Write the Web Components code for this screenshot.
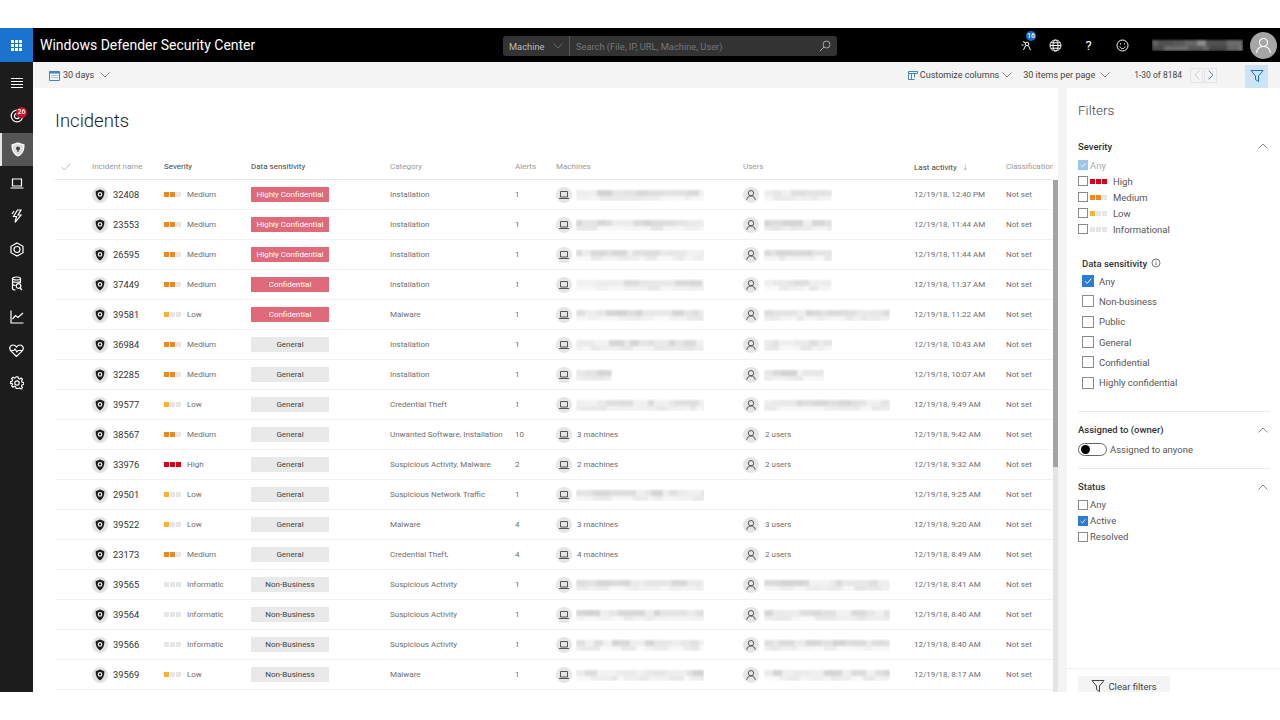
<!DOCTYPE html>
<html lang="en">
<head>
<meta charset="utf-8">
<title>Incidents</title>
<style>
  html, body { margin: 0; background: #fff; }
  body { font-family: Roboto, "Liberation Sans", sans-serif; color: #333; overflow: hidden; }
</style>
</head>
<body>
<wd-shell></wd-shell>
<script>
const ICON = {
  chevDown: '<svg width="10" height="6" viewBox="0 0 10 6" fill="none" stroke="currentColor" stroke-width="1"><path d="M.5.5 5 5 9.5.5"/></svg>',
  chevUp: '<svg width="10" height="6" viewBox="0 0 10 6" fill="none" stroke="currentColor" stroke-width="1"><path d="M.5 5.5 5 1l4.5 4.5"/></svg>',
  funnel: '<svg width="14" height="14" viewBox="0 0 14 14" fill="none" stroke="currentColor" stroke-width="1"><path d="M1 1.500h12L8.500 7v5.500l-3-2V7z"/></svg>',
  shield: '<svg width="16" height="16" viewBox="0 0 16 16"><circle cx="8" cy="8" r="8" fill="#e4e4e4"/><path d="M8 2.600 12.400 4.200c0 4.400-1.200 7.400-4.400 9.200C4.800 11.600 3.600 8.600 3.600 4.200z" fill="#1c1c1c"/><circle cx="8" cy="7.400" r="2.300" fill="#eee"/><circle cx="8" cy="7.400" r="1.100" fill="#1c1c1c"/></svg>',
  laptop: '<svg width="16" height="16" viewBox="0 0 16 16" fill="none"><circle cx="8" cy="8" r="8" fill="#e6e6e6"/><path d="M4.500 4.500h7v5.500h-7zM3 11.500h10" stroke="#555" stroke-width="1"/></svg>',
  person: '<svg width="16" height="16" viewBox="0 0 16 16" fill="none"><circle cx="8" cy="8" r="8" fill="#e6e6e6"/><circle cx="8" cy="6.200" r="2.700" stroke="#555"/><path d="M3.800 12.800c.4-2.600 2-3.900 4.200-3.900s3.800 1.300 4.200 3.900" stroke="#555"/></svg>'
};

function tpl(css, html) {
  return `<style>${css}</style>${html}`;
}

// pixelated strip standing in for redacted names
class BlurStrip extends HTMLElement {
  connectedCallback() {
    const w = +this.getAttribute("w") || 60;
    let seed = +this.getAttribute("seed") || 7;
    const rnd = () => (seed = (seed * 16807) % 2147483647) / 2147483647;
    const dark = this.hasAttribute("dark");
    const band = (lo, hi) => {
      const stops = [];
      let x = 0;
      while (x < w) {
        const step = 6 + Math.floor(rnd() * 4) * 3;
        const v = Math.round(lo + rnd() * (hi - lo));
        const c = `rgb(${v},${v},${v})`;
        stops.push(`${c} ${x}px`, `${c} ${x + step}px`);
        x += step;
      }
      return `linear-gradient(90deg,${stops.join(",")})`;
    };
    const root = this.attachShadow({ mode: "open" });
    const a = dark ? band(70, 150) : band(210, 242);
    const b = dark ? band(60, 130) : band(230, 250);
    root.innerHTML = tpl(`
      :host { display: block; width: ${w}px; height: 12px; overflow: hidden; }
      div { height: 100%; filter: blur(1.2px); background-image: ${a}, ${b};
        background-size: 100% 6px, 100% 6px; background-position: 0 1px, 0 7px; background-repeat: no-repeat; }
    `, `<div></div>`);
  }
}
customElements.define("blur-strip", BlurStrip);

class SevBars extends HTMLElement {
  connectedCallback() {
    const level = (this.getAttribute("level") || "").toLowerCase();
    const map = { high: [3, "#d7001c"], medium: [2, "#f0861f"], low: [1, "#fbb12c"] };
    const [n, color] = map[level] || [0, "#e6e6e6"];
    let cells = "";
    for (let i = 0; i < 3; i++) cells += `<i style="background:${i < n ? color : "#e6e6e6"}"></i>`;
    this.attachShadow({ mode: "open" }).innerHTML = tpl(`
      :host { display: inline-flex; gap: 1px; }
      i { display: block; width: 5px; height: 5px; }
    `, cells);
  }
}
customElements.define("sev-bars", SevBars);

class IncidentRow extends HTMLElement {
  connectedCallback() {
    const d = this.data;
    const tagClass = /confidential/i.test(d.tag) ? "hot" : "";
    const who = (txt, w, seed) => txt
      ? `<span class="cnt">${txt}</span>`
      : `<blur-strip w="${w}" seed="${seed}"></blur-strip>`;
    const machine = `<span class="ico">${ICON.laptop}</span>${who(d.machines, d.mw, d.id)}`;
    const user = d.uw === 0 && !d.users ? "" : `<span class="ico u">${ICON.person}</span>${who(d.users, d.uw, d.id + 91)}`;
    this.attachShadow({ mode: "open" }).innerHTML = tpl(`
      :host { display: grid; grid-template-columns: 37px 72px 87px 139px 125px 41px 187px 171px 92px 46px;
        height: 30px; box-sizing: border-box; border-bottom: 1px solid #f1f1f1; align-items: center;
        font-size: 8px; color: #6e6e6e; white-space: nowrap; }
      .flex { display: flex; align-items: center; }
      .id { font-size: 9.300px; color: #333; gap: 5px; }
      .id svg, .ico svg { display: block; }
      .sev { gap: 6px; }
      .sev span { display: block; max-width: 36px; overflow: hidden; }
      .tag { width: 78px; height: 15px; line-height: 15px; text-align: center; background: #e9e9e9; color: #444; }
      .tag.hot { background: #de6a7a; color: #fff; }
      .ico { margin-right: 4px; }
      .ico.u { margin-right: 5px; }
      .cnt { margin-left: 1px; }
    `, `
      <span></span>
      <span class="flex id">${ICON.shield}<span>${d.id}</span></span>
      <span class="flex sev"><sev-bars level="${d.sev}"></sev-bars><span>${d.sev}</span></span>
      <span class="tag ${tagClass}">${d.tag}</span>
      <span>${d.cat}</span>
      <span>${d.alerts}</span>
      <span class="flex">${machine}</span>
      <span class="flex">${user}</span>
      <span>${d.time}</span>
      <span>Not set</span>
    `);
  }
}
customElements.define("incident-row", IncidentRow);

const HC = "Highly Confidential", CF = "Confidential", GN = "General", NB = "Non-Business";
const ROWS = [
  { id: 32408, sev: "Medium", tag: HC, cat: "Installation", alerts: 1, mw: 128, uw: 68, time: "12/19/18, 12:40 PM" },
  { id: 23553, sev: "Medium", tag: HC, cat: "Installation", alerts: 1, mw: 128, uw: 68, time: "12/19/18, 11:44 AM" },
  { id: 26595, sev: "Medium", tag: HC, cat: "Installation", alerts: 1, mw: 128, uw: 68, time: "12/19/18, 11:44 AM" },
  { id: 37449, sev: "Medium", tag: CF, cat: "Installation", alerts: 1, mw: 128, uw: 68, time: "12/19/18, 11:37 AM" },
  { id: 39581, sev: "Low", tag: CF, cat: "Malware", alerts: 1, mw: 128, uw: 126, time: "12/19/18, 11:22 AM" },
  { id: 36984, sev: "Medium", tag: GN, cat: "Installation", alerts: 1, mw: 128, uw: 68, time: "12/19/18, 10:43 AM" },
  { id: 32285, sev: "Medium", tag: GN, cat: "Installation", alerts: 1, mw: 36, uw: 60, time: "12/19/18, 10:07 AM" },
  { id: 39577, sev: "Low", tag: GN, cat: "Credential Theft", alerts: 1, mw: 128, uw: 126, time: "12/19/18, 9:49 AM" },
  { id: 38567, sev: "Medium", tag: GN, cat: "Unwanted Software, Installation", alerts: 10, machines: "3 machines", users: "2 users", time: "12/19/18, 9:42 AM" },
  { id: 33976, sev: "High", tag: GN, cat: "Suspicious Activity, Malware", alerts: 2, machines: "2 machines", users: "2 users", time: "12/19/18, 9:32 AM" },
  { id: 29501, sev: "Low", tag: GN, cat: "Suspicious Network Traffic", alerts: 1, mw: 128, uw: 0, time: "12/19/18, 9:25 AM" },
  { id: 39522, sev: "Low", tag: GN, cat: "Malware", alerts: 4, machines: "3 machines", users: "3 users", time: "12/19/18, 9:20 AM" },
  { id: 23173, sev: "Medium", tag: GN, cat: "Credential Theft,", alerts: 4, machines: "4 machines", users: "2 users", time: "12/19/18, 8:49 AM" },
  { id: 39565, sev: "Informational", tag: NB, cat: "Suspicious Activity", alerts: 1, mw: 128, uw: 126, time: "12/19/18, 8:41 AM" },
  { id: 39564, sev: "Informational", tag: NB, cat: "Suspicious Activity", alerts: 1, mw: 128, uw: 126, time: "12/19/18, 8:40 AM" },
  { id: 39566, sev: "Informational", tag: NB, cat: "Suspicious Activity", alerts: 1, mw: 128, uw: 126, time: "12/19/18, 8:40 AM" },
  { id: 39569, sev: "Low", tag: NB, cat: "Malware", alerts: 1, mw: 128, uw: 126, time: "12/19/18, 8:17 AM" }
];

class IncidentTable extends HTMLElement {
  connectedCallback() {
    const root = this.attachShadow({ mode: "open" });
    root.innerHTML = tpl(`
      :host { display: block; }
      h1 { margin: 0; font-size: 18.500px; font-weight: 300; line-height: 26px; color: #222; padding-top: 20px; height: 68px; box-sizing: border-box; }
      .head { display: grid; grid-template-columns: 37px 72px 87px 139px 125px 41px 187px 171px 92px 46px;
        height: 24px; box-sizing: border-box; padding-bottom: 2px; align-items: center; font-size: 8px; color: #999; white-space: nowrap; border-bottom: 1px solid #eaeaea; }
      .dark { color: #444; }
      .head svg { display: block; }
      .sort { margin-left: 4px; color: #888; font-size: 10px; }
    `, `
      <h1>Incidents</h1>
      <div class="head">
        <span style="padding-left:6px"><svg width="10" height="8" viewBox="0 0 10 8" fill="none" stroke="#bbb"><path d="M.5 4 3.500 7 9.500.5"/></svg></span>
        <span>Incident name</span><span class="dark">Severity</span><span class="dark">Data sensitivity</span>
        <span>Category</span><span>Alerts</span><span>Machines</span><span>Users</span>
        <span class="dark">Last activity <span class="sort">↓</span></span><span>Classification</span>
      </div>
      <div id="rows"></div>
    `);
    const box = root.getElementById("rows");
    ROWS.forEach(r => {
      const el = document.createElement("incident-row");
      el.data = r;
      box.appendChild(el);
    });
  }
}
customElements.define("incident-table", IncidentTable);

class CheckItem extends HTMLElement {
  connectedCallback() {
    const size = this.getAttribute("size") || 10;
    const on = this.hasAttribute("on");
    const muted = this.hasAttribute("muted");
    const level = this.getAttribute("level");
    const gap = this.getAttribute("gap") || 2;
    this.attachShadow({ mode: "open" }).innerHTML = tpl(`
      :host { display: flex; align-items: center; gap: ${gap}px; font-size: 9.500px; color: #555; white-space: nowrap;
        height: var(--item-h, 16px); }
      .box { width: ${size}px; height: ${size}px; box-sizing: border-box; border: 1px solid #8a8a8a; flex: none; display: block; }
      .box.on { background: #2b7cd3; border-color: #2b7cd3; }
      .box.muted { background: #9cc5ea; border-color: #9cc5ea; }
      .box svg { display: block; width: 100%; height: 100%; }
      .muted-text { color: #aaa; }
      sev-bars { margin-right: 4px; }
    `, `
      <span class="box ${on ? "on" : ""} ${muted ? "muted" : ""}">${on || muted ? '<svg viewBox="0 0 10 10" fill="none" stroke="#fff" stroke-width="1"><path d="M2 5.200 4.200 7.400 8.200 2.600"/></svg>' : ""}</span>
      ${level ? `<sev-bars level="${level}"></sev-bars>` : ""}
      <span class="${muted ? "muted-text" : ""}"><slot></slot></span>
    `);
  }
}
customElements.define("check-item", CheckItem);

class FilterGroup extends HTMLElement {
  connectedCallback() {
    const title = this.getAttribute("title");
    this.attachShadow({ mode: "open" }).innerHTML = tpl(`
      :host { display: block; }
      .t { display: flex; justify-content: space-between; align-items: center; height: 16px;
        font-size: 9.500px; font-weight: 500; color: #333; padding-right: 2px; }
      .t span:last-child { color: #888; display: block; }
      .t svg { display: block; }
    `, `<div class="t"><span>${title}</span><span>${ICON.chevUp}</span></div><slot></slot>`);
  }
}
customElements.define("filter-group", FilterGroup);

class FilterPanel extends HTMLElement {
  connectedCallback() {
    this.attachShadow({ mode: "open" }).innerHTML = tpl(`
      :host { display: flex; flex-direction: column; width: 213px; flex: none; box-sizing: border-box; background: #fff; overflow: hidden; }
      .body { padding: 0 10px 0 11px; flex: 1; }
      h2 { margin: 0; font-size: 13.500px; font-weight: 300; line-height: 20px; color: #444; padding-top: 12px; height: 51px; box-sizing: border-box; }
      .sens { margin: 18px 0 0 4px; --item-h: 20.300px; }
      .sens .t { font-size: 9.500px; font-weight: 500; color: #333; display: flex; align-items: center; gap: 4px; height: 16px; }
      hr { border: 0; border-top: 1px solid #e8e8e8; margin: 0; }
      .toggle { display: flex; align-items: center; gap: 3px; font-size: 9.500px; color: #555; height: 18px; margin-top: 3px; }
      .sw { width: 29px; height: 13px; box-sizing: border-box; border: 1px solid #666; border-radius: 7px; display: flex; align-items: center; padding-left: 2px; }
      .sw i { width: 9px; height: 9px; border-radius: 50%; background: #000; display: block; }
      footer { border-top: 1px solid #f0f0f0; padding: 7px 0 0 11px; height: 24px; flex: none; box-sizing: border-box; overflow: hidden; }
      .btn { width: 92px; height: 20px; background: #f4f4f4; display: flex; align-items: center; justify-content: center; gap: 3px; font-size: 9.500px; color: #444; }
    `, `
      <div class="body">
        <h2>Filters</h2>
        <filter-group title="Severity" style="margin-top:-1px">
          <div style="height:3px"></div>
          <check-item muted>Any</check-item>
          <check-item level="high">High</check-item>
          <check-item level="medium">Medium</check-item>
          <check-item level="low">Low</check-item>
          <check-item level="informational">Informational</check-item>
        </filter-group>
        <div class="sens">
          <div class="t">Data sensitivity <svg width="10" height="10" viewBox="0 0 10 10" fill="none" stroke="#555" stroke-width=".8"><circle cx="5" cy="5" r="4"/><path d="M5 4.300v3M5 2.500v1"/></svg></div>
          <check-item size="12" gap="5" on>Any</check-item>
          <check-item size="12" gap="5">Non-business</check-item>
          <check-item size="12" gap="5">Public</check-item>
          <check-item size="12" gap="5">General</check-item>
          <check-item size="12" gap="5">Confidential</check-item>
          <check-item size="12" gap="5">Highly confidential</check-item>
        </div>
        <hr style="margin-top:18px">
        <filter-group title="Assigned to (owner)" style="margin-top:10px">
          <div class="toggle"><span class="sw"><i></i></span>Assigned to anyone</div>
        </filter-group>
        <hr style="margin-top:9px">
        <filter-group title="Status" style="margin-top:10px">
          <div style="height:2px"></div>
          <check-item>Any</check-item>
          <check-item on>Active</check-item>
          <check-item>Resolved</check-item>
        </filter-group>
      </div>
      <footer><div class="btn">${ICON.funnel}<span>Clear filters</span></div></footer>
    `);
  }
}
customElements.define("filter-panel", FilterPanel);

class WdToolbar extends HTMLElement {
  connectedCallback() {
    this.attachShadow({ mode: "open" }).innerHTML = tpl(`
      :host { display: flex; align-items: center; height: 26px; background: #f4f4f4; font-size: 9px; color: #444;
        padding-left: 16px; white-space: nowrap; flex: none; box-sizing: border-box; }
      span.i { display: flex; align-items: center; }
      svg { display: block; }
      .g { color: #888; }
      .right { margin-left: auto; display: flex; align-items: center; }
      .pg { width: 13px; height: 15px; box-sizing: border-box; border: 1px solid #e4e4e4; display: flex; align-items: center; justify-content: center; }
      .fbtn { width: 23px; height: 23px; background: #cde4f7; color: #1a73c9; display: flex; align-items: center; justify-content: center; margin: 2px 12px 0 28px; }
    `, `
      <span class="i" style="gap:3px">
        <svg width="11" height="11" viewBox="0 0 11 11" fill="none"><path d="M.5 1.500h10v9H.5z" stroke="#3a87cf"/><path d="M.5 1.500h10v2H.5z" fill="#3a87cf"/><path d="M2 5.500h7M2 7.500h7" stroke="#a9c9e8"/></svg>30 days
        <span class="g" style="margin-left:3px">${ICON.chevDown}</span>
      </span>
      <span class="right">
        <span class="i" style="gap:2px"><svg width="10" height="9" viewBox="0 0 10 9" fill="none" stroke="#3a87cf"><path d="M.5.500h9v2h-9zM.5 2.500v6h6M3.500 2.500v6M6.500 2.500v4"/></svg>Customize columns
        <span class="g" style="margin-left:1px">${ICON.chevDown}</span></span>
        <span class="i" style="gap:5px;margin-left:11px">30 items per page <span class="g">${ICON.chevDown}</span></span>
        <span style="margin-left:24px;font-size:8.500px">1-30 of 8184</span>
        <span class="pg" style="margin-left:8px;color:#ccc"><svg width="6" height="10" viewBox="0 0 6 10" fill="none" stroke="currentColor"><path d="M5.500.500 1 5l4.500 4.500"/></svg></span>
        <span class="pg" style="margin-left:1px;color:#5a8fc4"><svg width="6" height="10" viewBox="0 0 6 10" fill="none" stroke="currentColor"><path d="M.5.500 5 5 .5 9.500"/></svg></span>
        <span class="fbtn">${ICON.funnel}</span>
      </span>
    `);
  }
}
customElements.define("wd-toolbar", WdToolbar);

class WdTopbar extends HTMLElement {
  connectedCallback() {
    this.attachShadow({ mode: "open" }).innerHTML = tpl(`
      :host { display: flex; align-items: center; height: 34px; background: #000; color: #fff; box-sizing: border-box; }
      svg { display: block; }
      .waffle { width: 33px; height: 34px; background: #1a73cf; display: grid; place-items: center; flex: none; }
      .title { margin-left: 7px; font-size: 14px; width: 463px; white-space: nowrap; }
      .search { width: 334px; height: 20px; margin-top: 2px; background: #333; border-radius: 3px; display: flex; align-items: center; font-size: 9.300px; color: #777; flex: none; }
      .sel { width: 67px; height: 100%; box-sizing: border-box; border-right: 1px solid #555; display: flex; align-items: center; justify-content: space-between; padding: 0 6px; color: #bbb; }
      .sel span:last-child { color: #666; }
      .ph { flex: 1; padding-left: 6px; }
      .mag { padding-right: 6px; color: #aaa; }
      .icons { display: flex; align-items: center; margin-left: 175px; position: relative; }
      .icons > span { display: flex; justify-content: center; }
      .icons > .badge { position: absolute; left: 14px; top: -8px; width: 10px; height: 10px; line-height: 10px; border-radius: 50%; background: #0f6fd1; font-size: 7px; justify-content: center; font-weight: 500; }
      .name { margin-left: 13.500px; }
      .avatar { margin-left: 7px; width: 27px; height: 27px; border-radius: 50%; background: #a6a6a6; display: grid; place-items: center; flex: none; }
    `, `
      <span class="waffle"><svg width="11" height="11" viewBox="0 0 11 11" fill="#fff"><path d="M0 0h3v3H0zM4 0h3v3H4zM8 0h3v3H8zM0 4h3v3H0zM4 4h3v3H4zM8 4h3v3H8zM0 8h3v3H0zM4 8h3v3H4zM8 8h3v3H8z"/></svg></span>
      <span class="title">Windows Defender Security Center</span>
      <span class="search">
        <span class="sel"><span>Machine</span><span>${ICON.chevDown}</span></span>
        <span class="ph">Search (File, IP, URL, Machine, User)</span>
        <span class="mag"><svg width="12" height="12" viewBox="0 0 12 12" fill="none" stroke="currentColor"><circle cx="7.500" cy="4.500" r="3.500"/><path d="M5 7 1 11"/></svg></span>
      </span>
      <span class="icons">
        <span style="width:29px"><svg width="12" height="12" viewBox="0 0 12 12" fill="none" stroke="#fff"><circle cx="6" cy="5" r="1.800"/><path d="M4.500 6.800 2.500 11M7.500 6.800 9.500 11M2 2.500l2.500 1.500M.5 6h2"/></svg></span>
        <span class="badge">16</span>
        <span style="width:29px"><svg width="13" height="13" viewBox="0 0 13 13" fill="none" stroke="#fff"><circle cx="6.500" cy="6.500" r="5.500"/><ellipse cx="6.500" cy="6.500" rx="2.500" ry="5.500"/><path d="M1 6.500h11M1.800 3.800h9.400M1.800 9.200h9.400"/></svg></span>
        <span style="width:37px;font-size:13px;line-height:13px">?</span>
        <span style="width:31px"><svg width="13" height="13" viewBox="0 0 13 13" fill="none" stroke="#fff"><circle cx="6.500" cy="6.500" r="5.500"/><path d="M3.800 7.500c.6 1.500 1.500 2.100 2.700 2.100s2.100-.6 2.700-2.100M4.500 4.300v1.200M8.500 4.300v1.200"/></svg></span>
      </span>
      <blur-strip class="name" w="91" seed="33" dark></blur-strip>
      <span class="avatar"><svg width="17" height="17" viewBox="0 0 17 17" fill="none" stroke="#fff" stroke-width="1.200"><circle cx="8.500" cy="5.500" r="4"/><path d="M1.500 16c.6-4 3.400-6.500 7-6.500s6.400 2.500 7 6.500"/></svg></span>
    `);
  }
}
customElements.define("wd-topbar", WdTopbar);

class WdSidenav extends HTMLElement {
  connectedCallback() {
    const s = 'fill="none" stroke="#fff" stroke-width="1.200"';
    const items = [
      `<svg width="14" height="12" viewBox="0 0 14 12" ${s}><path d="M1 1.500h12M1 4.500h12M1 7.500h12M1 10.500h12"/></svg>`,
      `<svg width="14" height="14" viewBox="0 0 14 14" ${s} stroke-width="1.500"><path d="M12.800 7A5.800 5.800 0 1 1 7 1.200"/><circle cx="7" cy="7" r="2.600"/><path d="M7 7l5-5"/></svg><span class="b">26</span>`,
      `<svg width="14" height="15" viewBox="0 0 14 15" ${s}><path d="M7 1 13 3c0 5.500-1.500 9-6 11C2.500 12 1 8.500 1 3z" fill="#ddd" stroke="#fff"/><circle cx="7" cy="6.500" r="2" fill="#444" stroke="none"/><path d="M7 7v3" stroke="#444"/></svg>`,
      `<svg width="14" height="11" viewBox="0 0 14 11" ${s}><path d="M2.500 1h9v7h-9zM.5 10h13"/></svg>`,
      `<svg width="12" height="15" viewBox="0 0 12 15" ${s}><path d="M6.500 1 2.500 7.500h3L4 13.500 10 6H7l3-5zM1 5l2-3"/></svg>`,
      `<svg width="14" height="15" viewBox="0 0 14 15" ${s}><path d="M7 1l6 3.300v6.400L7 14l-6-3.300V4.300z"/><circle cx="7" cy="7.500" r="3"/></svg>`,
      `<svg width="12" height="15" viewBox="0 0 12 15" ${s}><ellipse cx="5.500" cy="2.500" rx="4" ry="1.500"/><path d="M1.500 2.500v10c0 .8 1.500 1.500 3 1.500M9.500 2.500V7M1.500 5.500c1 1 7 1 8 0M1.500 8.500c.8.700 2 .9 3 1"/><circle cx="7.500" cy="10" r="2.300"/><path d="M9 12l2 2"/></svg>`,
      `<svg width="14" height="14" viewBox="0 0 14 14" ${s}><path d="M1 .5V13h12.500M2.500 9 5.500 5.500 8 7.500 13 3"/></svg>`,
      `<svg width="15" height="13" viewBox="0 0 15 13" ${s}><path d="M7.500 12.500 1.800 6.800C-.5 4.300 1.300 1 4 1c1.500 0 2.700.8 3.500 2C8.300 1.800 9.500 1 11 1c2.700 0 4.500 3.300 2.200 5.800z"/><path d="M1.500 6.500h3.500l1-1.500 2 3 1-1.500h4.500"/></svg>`,
      `<svg width="14" height="14" viewBox="0 0 14 14" ${s}><circle cx="7" cy="7" r="2.200"/><path d="M6 .8h2l.4 1.800 1.300.6 1.600-1 1.400 1.400-1 1.600.6 1.300 1.800.4v2l-1.800.4-.6 1.300 1 1.600-1.400 1.400-1.600-1-1.300.6L8 13.200H6l-.4-1.800-1.300-.6-1.600 1-1.400-1.400 1-1.600-.6-1.300L-.1 8V6l1.800-.4.6-1.300-1-1.600 1.400-1.400 1.600 1 1.300-.6z" transform="translate(.4 0) scale(.95)"/></svg>`
    ];
    this.attachShadow({ mode: "open" }).innerHTML = tpl(`
      :host { display: block; width: 33px; background: #1c1c1c; padding-top: 4.200px; box-sizing: border-box; flex: none; }
      div { height: 33.400px; display: flex; align-items: center; justify-content: center; position: relative; box-sizing: border-box; }
      svg { display: block; }
      .on { background: #555; border-left: 2px solid #e6e6e6; }
      .b { position: absolute; left: 16px; top: 7px; width: 11px; height: 11px; line-height: 11px; border-radius: 50%; background: #c4122f; color: #fff; font-size: 7px; text-align: center; font-weight: 500; }
    `, items.map((h, i) => `<div class="${i === 2 ? "on" : ""}">${h}</div>`).join(""));
  }
}
customElements.define("wd-sidenav", WdSidenav);

class WdShell extends HTMLElement {
  connectedCallback() {
    this.attachShadow({ mode: "open" }).innerHTML = tpl(`
      :host { display: flex; flex-direction: column; height: 664px; margin-top: 28px; overflow: hidden; }
      .main { flex: 1; display: flex; min-height: 0; }
      .col { flex: 1; display: flex; flex-direction: column; min-width: 0; }
      .content { flex: 1; display: flex; min-height: 0; }
      .list { padding-left: 22px; flex: none; width: 998px; overflow: hidden; }
      .scroll { width: 5px; flex: none; padding-top: 92px; background: linear-gradient(#fff 92px, #e4e4e4 92px); box-sizing: border-box; }
      .scroll i { display: block; height: 287px; background: #a3a3a9; }
      .gutter { width: 9px; flex: none; background: #f4f4f4; }
    `, `
      <wd-topbar></wd-topbar>
      <div class="main">
        <wd-sidenav></wd-sidenav>
        <div class="col">
          <wd-toolbar></wd-toolbar>
          <div class="content">
            <div class="list"><incident-table></incident-table></div>
            <div class="scroll"><i></i></div>
            <div class="gutter"></div>
            <filter-panel></filter-panel>
          </div>
        </div>
      </div>
    `);
  }
}
customElements.define("wd-shell", WdShell);
</script>
</body>
</html>
